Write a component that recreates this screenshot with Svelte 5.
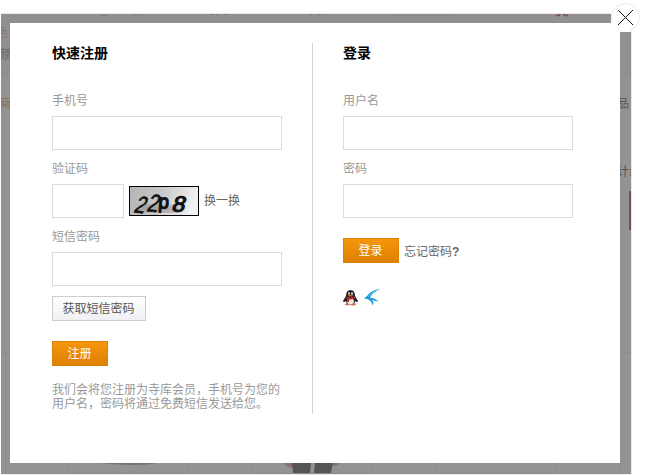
<script>
  let phone = $state('');
  let captcha = $state('');
  let sms = $state('');
  let user = $state('');
  let password = $state('');
</script>

<div class="page">
  <div class="overlay">
    <svg class="behind" width="630" height="460" viewBox="1 14 630 460" aria-hidden="true">
      <rect x="1" y="14" width="630" height="61" fill="#918f90" />
      <path d="M1 75.500H631M1 352.500H631M5.500 352V474M67.500 463V473.500H188.500V463M251.500 463V473.500H372.500V463M435.500 463V473.500H556.500V463M619.500 463V474" fill="none" stroke="#8c8c8c" />
      <path d="M392.500 14V16M405.500 14V16M449.500 14V16M392 15.500H450" fill="none" stroke="#888687" />
      <path d="M100 15.500H107M134 15H136M138 14V16M141 14V16" stroke="#85776c" stroke-width="1" />
      <path d="M210 14.500H213M216 14.500H218M224 14.500H228M310 14.500H312M318 14.500H321" stroke="#777" />
      <path d="M556 15.500H559L560 14M563 14L565 15.500H568" fill="none" stroke="#7c4b58" stroke-width="1.500" />
      <g font-size="12">
        <text x="-4" y="37" fill="#85776c">色</text>
        <text x="-1" y="59" fill="#666">颜</text>
        <text x="-1" y="108" fill="#85705f">商</text>
        <text x="617" y="108" fill="#555">品</text>
        <text x="617" y="176" fill="#555">计</text>
        <text x="629" y="176" fill="#555">纟</text>
      </g>
      <rect x="629" y="191" width="2" height="39" fill="#7c4b58" />
      <path d="M102 463C114 465 145 466 156 463Z" fill="#77706d" />
      <path d="M283 463H293V468Q286 467 283 463M333 463H340Q338 466 333 466Z" fill="#887371" />
      <path d="M292 463H311L310 473H293ZM315 463H333L331 473H314Z" fill="#555" />
    </svg>

    <main class="dialog">
      <section class="register">
        <h2>快速注册</h2>
        <label for="phone">手机号</label>
        <input id="phone" bind:value={phone} />
        <label for="captcha">验证码</label>
        <div class="captcha-row">
          <input id="captcha" class="short" bind:value={captcha} />
          <svg class="captcha" width="70" height="30" viewBox="0 0 70 30">
            <defs>
              <linearGradient id="paper" x2="1" y2=".15">
                <stop stop-color="#b4b4b4" /><stop offset=".5" stop-color="#c8c8c8" /><stop offset="1" stop-color="#f2f2f2" />
              </linearGradient>
              <filter id="smudge" x="-30%" y="-30%" width="160%" height="160%"><feGaussianBlur stdDeviation="3" /></filter>
            </defs>
            <rect x=".5" y=".5" width="69" height="29" fill="url(#paper)" stroke="#000" />
            <path d="M10 24L23 20L38 25L51 22" fill="none" stroke="#777" stroke-width="7" opacity=".55" filter="url(#smudge)" />
            <g class="scrawl" fill="#111" stroke="#111">
              <text transform="translate(4 26) rotate(8) skewX(-14) scale(.8 1)" font-size="24" stroke-width=".7">2</text>
              <text transform="translate(17 25) rotate(6) skewX(-12) scale(.8 1)" font-size="25" stroke-width=".7">2</text>
              <text transform="translate(29 22) rotate(4) scale(.95 1)" font-size="20" stroke-width="1.300">p</text>
              <text transform="translate(42 25) rotate(4) skewX(-12) scale(1.050 1)" font-size="22" stroke-width="1.200">8</text>
            </g>
          </svg>
          <span class="link">换一换</span>
        </div>
        <label for="sms">短信密码</label>
        <input id="sms" bind:value={sms} />
        <button class="plain">获取短信密码</button>
        <button class="primary signup">注册</button>
        <p>我们会将您注册为寺库会员，手机号为您的<br />用户名，密码将通过免费短信发送给您。</p>
      </section>

      <section class="login">
        <h2>登录</h2>
        <label for="user">用户名</label>
        <input id="user" bind:value={user} />
        <label for="password">密码</label>
        <input id="password" type="password" bind:value={password} />
        <div class="actions">
          <button class="primary">登录</button>
          <span class="link">忘记密码<b>?</b></span>
        </div>
        <div class="social">
          <svg width="16" height="16" viewBox="0 0 16 16" aria-label="QQ">
            <path d="M3 6Q3 0 7.500 0Q12 0 12 6L15 11Q14.500 13 12 11L11 15H4L3 11Q.5 13 0 11Z" fill="#242021" />
            <ellipse cx="7.500" cy="11.500" rx="3.300" ry="3.300" fill="#f3eeee" />
            <ellipse cx="6" cy="3.500" rx="1" ry="1.300" fill="#ddd" />
            <ellipse cx="9" cy="3.500" rx="1" ry="1.300" fill="#ddd" />
            <ellipse cx="7.500" cy="5.700" rx="2.500" ry=".9" fill="#b86a30" />
            <path d="M3 6.500Q7.500 9 12 6.500L12.200 8.300Q9 10 6.500 9.500L6 12H4V8.700Z" fill="#c92d38" />
            <path d="M2 14Q4 12.500 7 14.500Q5 16 2 15ZM8 14.500Q11 12.500 13 14Q13 16 8 15.500Z" fill="#c47b5d" />
          </svg>
          <svg width="17" height="17" viewBox="0 0 17 17" aria-label="飞信">
            <path d="M16 0Q7 1 3.500 6.500L0 9.500L3.500 10.200Q8 12 8.500 16.500Q10.500 13 8 10.700Q11 12.500 14.500 12.500Q11 9 6 8.500Q8 4 16 0Z" fill="#249bd6" />
            <path d="M13 1.500Q8 3 4.500 7.500" fill="none" stroke="#6bd0f1" />
          </svg>
        </div>
      </section>
    </main>

    <button class="close" aria-label="关闭">
      <svg width="29" height="29" viewBox="0 0 29 29">
        <rect width="29" height="28" fill="#fff" />
        <circle cx="14.500" cy="14.500" r="14" fill="#fff" stroke="#e9e9e9" />
        <rect y="19" width="20" height="10" fill="#fff" />
        <path d="M7 7L22 22M22 7L7 22" stroke="#111" stroke-width="1" />
      </svg>
    </button>
  </div>
</div>

<style>
  :global(body) { background: #fff; overflow: hidden; }
  .page {
    box-sizing: border-box;
    width: 645px;
    height: 475px;
    padding: 13px 0 0 1px;
    font: 12px/20px "Liberation Sans", "Noto Sans CJK SC", sans-serif;
    color: #999;
  }
  .overlay {
    position: relative;
    box-sizing: border-box;
    width: 631px;
    height: 462px;
    padding: 9px;
    border: solid #e9e9e9;
    border-width: 1px 1px 1px 0;
    background: #939393;
  }
  .behind { position: absolute; left: 0; top: 0; }
  .dialog {
    position: relative;
    display: flex;
    box-sizing: border-box;
    width: 610px;
    height: 440px;
    padding: 20px 0 0 42px;
    background: #fff;
  }
  section { display: flex; flex-direction: column; align-items: flex-start; height: 371px; }
  .register { width: 260px; border-right: 1px solid #d4d4cf; }
  .login { padding-left: 30px; }
  h2 { margin: 0 0 27px; font-size: 14px; line-height: 20px; color: #000; }
  label { height: 19px; padding-top: 1px; margin-bottom: 6px; }
  input {
    box-sizing: border-box;
    width: 230px;
    height: 34px;
    margin: 0 0 8px;
    padding: 0 8px;
    border: 1px solid #dcdcdc;
    border-radius: 0;
    background: #fff;
    outline: 0;
  }
  .captcha-row { display: flex; align-items: center; height: 34px; margin-bottom: 8px; }
  .captcha-row input { margin: 0; }
  .captcha-row .short { width: 72px; }
  .captcha { display: block; margin: 0 5px; overflow: hidden; }
  .scrawl { font-family: "Liberation Sans", sans-serif; }
  .link { color: #666; }
  button { box-sizing: border-box; padding: 0; font: inherit; border-radius: 0; cursor: pointer; }
  .plain {
    width: 94px;
    height: 25px;
    margin-top: 2px;
    padding: 2px 1px 0 0;
    line-height: 21px;
    color: #555;
    border: 1px solid #ccc;
    background: linear-gradient(#fff, #f0eff4);
  }
  .primary {
    width: 56px;
    height: 25px;
    padding: 2px 1px 0 0;
    line-height: 21px;
    color: #fff;
    border: 1px solid #d98207;
    background: linear-gradient(#f5960b, #df8000);
  }
  .signup { margin-top: 20px; }
  p { margin: 17px 0 0; line-height: 14px; white-space: nowrap; }
  .actions { display: flex; align-items: center; gap: 5px; height: 25px; margin-top: 12px; }
  .actions .link { padding-top: 2px; }
  .social { display: flex; gap: 5px; align-items: center; height: 17px; margin-top: 26px; }
  .close { position: absolute; right: -9px; top: -11px; width: 29px; height: 29px; border: 0; background: none; }
  .close svg { display: block; }
</style>
